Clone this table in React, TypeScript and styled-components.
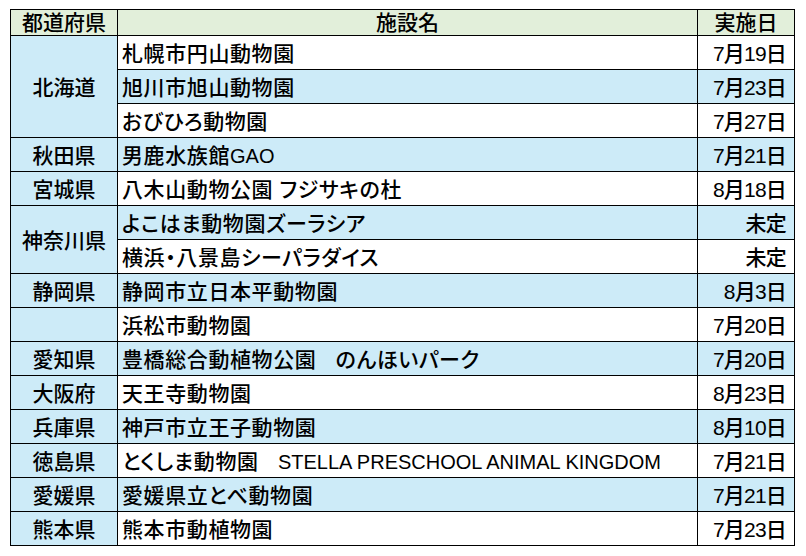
import React from 'react';
import styled, {createGlobalStyle} from 'styled-components';

type Visit = { pref?: string, span?: number, name: string, date: string, shaded: boolean }

const visits: Visit[] = [
    {pref: '北海道', span: 3, name: '札幌市円山動物園', date: '7月19日', shaded: false},
    {name: '旭川市旭山動物園', date: '7月23日', shaded: true},
    {name: 'おびひろ動物園', date: '7月27日', shaded: false},
    {pref: '秋田県', name: '男鹿水族館GAO', date: '7月21日', shaded: true},
    {pref: '宮城県', name: '八木山動物公園 フジサキの杜', date: '8月18日', shaded: false},
    {pref: '神奈川県', span: 2, name: 'よこはま動物園ズーラシア', date: '未定', shaded: true},
    {name: '横浜・八景島シーパラダイス', date: '未定', shaded: false},
    {pref: '静岡県', name: '静岡市立日本平動物園', date: '8月3日', shaded: true},
    {pref: '', name: '浜松市動物園', date: '7月20日', shaded: false},
    {pref: '愛知県', name: '豊橋総合動植物公園   のんほいパーク', date: '7月20日', shaded: true},
    {pref: '大阪府', name: '天王寺動物園', date: '8月23日', shaded: false},
    {pref: '兵庫県', name: '神戸市立王子動物園', date: '8月10日', shaded: true},
    {pref: '徳島県', name: 'とくしま動物園   STELLA PRESCHOOL ANIMAL KINGDOM', date: '7月21日', shaded: false},
    {pref: '愛媛県', name: '愛媛県立とべ動物園', date: '7月21日', shaded: true},
    {pref: '熊本県', name: '熊本市動植物園', date: '7月23日', shaded: false},
]

// latin runs are set a touch smaller, like the sheet's own font does
const withLatin = (text: string) =>
    text.split(/([A-Za-z][A-Za-z ]*[A-Za-z]|[A-Za-z])/).map((part, idx) =>
        idx % 2 === 1 ? <Latin key={idx}>{part}</Latin> : part)

const GlobalStyle = createGlobalStyle`
  html, body {
    margin: 0;
    padding: 0;
    background: #ffffff;
  }
`

const App = () => {
    return (
        <Page>
            <GlobalStyle/>
            <Table>
                <colgroup>
                    <col style={{width: 107}}/>
                    <col style={{width: 580}}/>
                    <col style={{width: 97}}/>
                </colgroup>
                <thead>
                <HeadRow>
                    <HeadCell>都道府県</HeadCell>
                    <HeadCell>施設名</HeadCell>
                    <HeadCell>実施日</HeadCell>
                </HeadRow>
                </thead>
                <tbody>
                {visits.map((v, idx) => (
                    <Row key={idx}>
                        {v.pref !== undefined ? <PrefCell rowSpan={v.span ?? 1}>{v.pref}</PrefCell> : null}
                        <NameCell $shaded={v.shaded}>{withLatin(v.name)}</NameCell>
                        <DateCell $shaded={v.shaded}>{v.date}</DateCell>
                    </Row>
                ))}
                </tbody>
            </Table>
        </Page>
    );
};

const blue = '#cdebf8'
const green = '#e2efda'

const Page = styled.div`
  padding: 9px 0 0 10px;
  font-family: "Liberation Sans", "Noto Sans CJK JP", sans-serif;
  color: #000;
`

const Table = styled.table`
  border-collapse: collapse;
  table-layout: fixed;
  width: 785px;
  font-size: 21px;
`

const HeadRow = styled.tr`
  height: 26px;
`

const Row = styled.tr`
  height: 34px;
`

const Cell = styled.td`
  border: 1px solid #000;
  padding: 0 4px;
  line-height: 24px;
  white-space: pre;
  overflow: hidden;
  vertical-align: middle;
  font-weight: 500;
`

const HeadCell = styled(Cell).attrs({as: 'th'})`
  background: ${green};
  text-align: center;
  padding-top: 0;
`

const PrefCell = styled(Cell)`
  background: ${blue};
  text-align: center;
  padding-top: 2px;
`

const NameCell = styled(Cell)<{ $shaded: boolean }>`
  background: ${p => p.$shaded ? blue : '#ffffff'};
  text-align: left;
  padding-top: 2px;
  letter-spacing: 0.6px;
  font-feature-settings: "palt";
`

const Latin = styled.span`
  font-size: 20px;
  letter-spacing: 0;
`

const DateCell = styled(Cell)<{ $shaded: boolean }>`
  background: ${p => p.$shaded ? blue : '#ffffff'};
  text-align: right;
  padding: 2px 8px 0 0;
  letter-spacing: -0.8px;
`

export default App;
